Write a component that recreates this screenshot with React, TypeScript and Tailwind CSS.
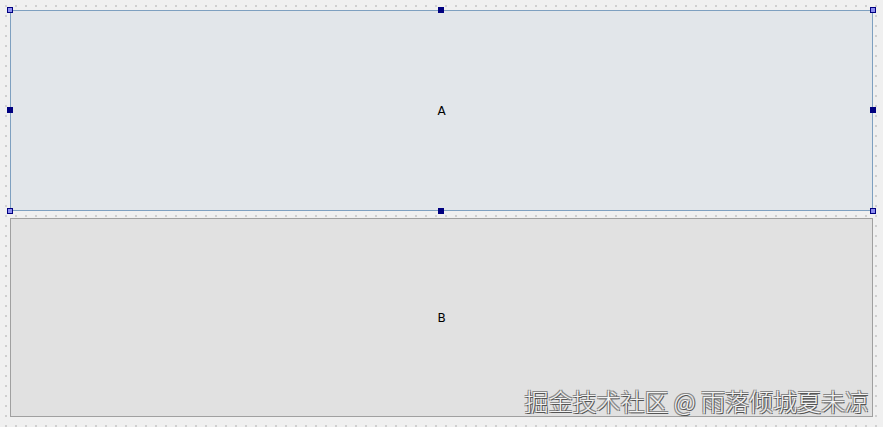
function Handle({ className }: { className: string }) {
  return <div className={"absolute h-[6px] w-[6px] " + className} />;
}

function App() {
  const corner = "border border-[#000080] bg-[#8c8cf0]";
  const mid = "bg-[#000080]";

  return (
    <div className="relative h-[427px] w-[883px] overflow-hidden bg-[#f0f0f0] bg-[radial-gradient(circle,#a8a8a8_0.6px,transparent_0.8px)] bg-[length:10px_10px] bg-[position:1px_1px] font-['DejaVu_Sans',sans-serif] text-[12px] text-black">
      <div className="flex h-full flex-col gap-[7px] p-[10px]">
        <div className="relative flex h-[201px] items-center justify-center border border-[#7ea0c0] bg-[#e2e6ea]">
          <span>A</span>
          <Handle className={"-left-[4px] -top-[4px] " + corner} />
          <Handle className={"left-[427px] -top-[4px] " + mid} />
          <Handle className={"-right-[4px] -top-[4px] " + corner} />
          <Handle className={"-left-[4px] top-[96px] " + mid} />
          <Handle className={"-right-[4px] top-[96px] " + mid} />
          <Handle className={"-left-[4px] -bottom-[4px] " + corner} />
          <Handle className={"left-[427px] -bottom-[4px] " + mid} />
          <Handle className={"-right-[4px] -bottom-[4px] " + corner} />
        </div>
        <div className="flex h-[199px] items-center justify-center border border-[#a0a0a0] bg-[#e1e1e1]">
          <span>B</span>
        </div>
      </div>
      <div className="absolute right-[14px] bottom-[14px] font-['Noto_Sans_CJK_SC',sans-serif] text-[24px] font-light leading-none text-[#f4f4f4] [text-shadow:1px_1px_0_#555,-1px_-1px_0_#888,1px_-1px_0_#888,-1px_1px_0_#888]">
        掘金技术社区 @ 雨落倾城夏未凉
      </div>
    </div>
  );
}

export default App;
